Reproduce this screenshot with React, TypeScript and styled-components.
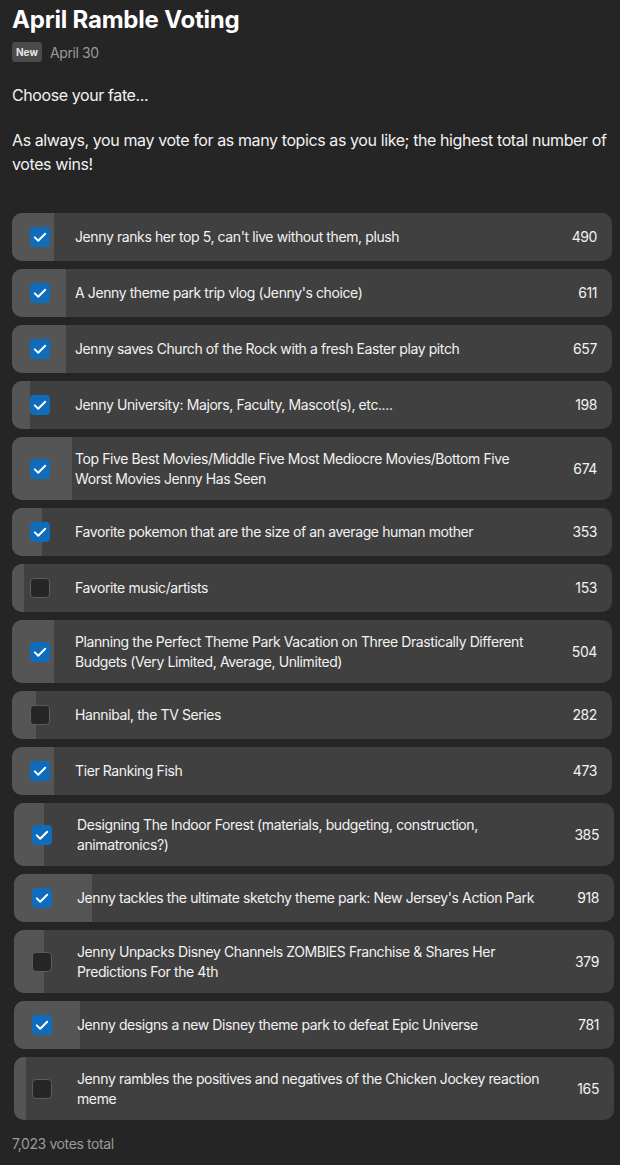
import React from 'react';
import styled, { createGlobalStyle } from 'styled-components';

interface Topic {
  title: string;
  votes: number;
  checked: boolean;
}

const topics: Topic[] = [
  { title: "Jenny ranks her top 5, can't live without them, plush", votes: 490, checked: true },
  { title: "A Jenny theme park trip vlog (Jenny's choice)", votes: 611, checked: true },
  { title: 'Jenny saves Church of the Rock with a fresh Easter play pitch', votes: 657, checked: true },
  { title: 'Jenny University: Majors, Faculty, Mascot(s), etc....', votes: 198, checked: true },
  {
    title: 'Top Five Best Movies/Middle Five Most Mediocre Movies/Bottom Five Worst Movies Jenny Has Seen',
    votes: 674,
    checked: true,
  },
  { title: 'Favorite pokemon that are the size of an average human mother', votes: 353, checked: true },
  { title: 'Favorite music/artists', votes: 153, checked: false },
  {
    title: 'Planning the Perfect Theme Park Vacation on Three Drastically Different Budgets (Very Limited, Average, Unlimited)',
    votes: 504,
    checked: true,
  },
  { title: 'Hannibal, the TV Series', votes: 282, checked: false },
  { title: 'Tier Ranking Fish', votes: 473, checked: true },
  {
    title: 'Designing The Indoor Forest (materials, budgeting, construction, animatronics?)',
    votes: 385,
    checked: true,
  },
  { title: "Jenny tackles the ultimate sketchy theme park: New Jersey's Action Park", votes: 918, checked: true },
  {
    title: 'Jenny Unpacks Disney Channels ZOMBIES Franchise & Shares Her Predictions For the 4th',
    votes: 379,
    checked: false,
  },
  { title: 'Jenny designs a new Disney theme park to defeat Epic Universe', votes: 781, checked: true },
  {
    title: 'Jenny rambles the positives and negatives of the Chicken Jockey reaction meme',
    votes: 165,
    checked: false,
  },
];

const total = topics.reduce((sum, t) => sum + t.votes, 0);

const GlobalStyle = createGlobalStyle`
  body {
    margin: 0;
    background: #252525;
    color: #f2f2f2;
    font-family: Inter, 'Noto Sans', sans-serif;
    letter-spacing: -0.025em;
  }
`;

const Page = styled.div`
  padding: 3px 8px 10px 12px;
`;

const Title = styled.h1`
  margin: 0;
  font-size: 24px;
  line-height: 34px;
  font-weight: 700;
  letter-spacing: -0.2px;
  color: #ffffff;
`;

const Meta = styled.div`
  display: flex;
  align-items: center;
  gap: 8px;
  margin-top: 5px;
`;

const Badge = styled.span`
  background: #4b4b4b;
  color: #e6e6e6;
  font-size: 10px;
  font-weight: 700;
  letter-spacing: 0;
  border-radius: 3px;
  padding: 0 4px;
  height: 20px;
  line-height: 20px;
`;

const Date = styled.span`
  color: #9a9a9a;
  font-size: 14px;
`;

const Paragraph = styled.p`
  margin: 21px 0 0;
  font-size: 16px;
  line-height: 24px;
  color: #f2f2f2;
`;

const List = styled.div`
  display: flex;
  flex-direction: column;
  gap: 8px;
  margin-top: 37px;
`;

const Row = styled.div<{ shift?: boolean }>`
  position: relative;
  display: flex;
  align-items: center;
  min-height: 48px;
  padding: 11.5px 15px 11.5px 18px;
  box-sizing: border-box;
  background: #404040;
  border-radius: 10px;
  overflow: hidden;
  margin-left: ${props => (props.shift ? '2px' : '0')};
  margin-right: ${props => (props.shift ? '-2px' : '0')};
`;

const Fill = styled.div`
  position: absolute;
  left: 0;
  top: 0;
  bottom: 0;
  background: #555555;
`;

const Box = styled.span<{ checked: boolean }>`
  position: relative;
  flex: none;
  width: 20px;
  height: 20px;
  box-sizing: border-box;
  border-radius: 4px;
  display: flex;
  align-items: center;
  justify-content: center;
  background: ${props => (props.checked ? '#0f6cbd' : '#262626')};
  border: ${props => (props.checked ? 'none' : '1px solid #5c5c5c')};
`;

const Label = styled.span`
  position: relative;
  flex: 1;
  margin-left: 25px;
  font-size: 14px;
  line-height: 20px;
  color: #f2f2f2;
`;

const Count = styled.span`
  position: relative;
  flex: none;
  margin-left: 24px;
  font-size: 14px;
  line-height: 20px;
  color: #f2f2f2;
`;

const Footer = styled.div`
  margin-top: 14px;
  font-size: 14px;
  line-height: 20px;
  color: #9a9a9a;
`;

const Check = () => (
  <svg width="20" height="20" viewBox="0 0 20 20" fill="none">
    <path d="M4.8 10.4l3.4 3.3 7-7" stroke="#ffffff" strokeWidth="2" strokeLinecap="round" strokeLinejoin="round" />
  </svg>
);

const App: React.FC = () => {
  return (
    <Page>
      <GlobalStyle />
      <Title>April Ramble Voting</Title>
      <Meta>
        <Badge>New</Badge>
        <Date>April 30</Date>
      </Meta>
      <Paragraph>Choose your fate...</Paragraph>
      <Paragraph>
        As always, you may vote for as many topics as you like; the highest total number of votes wins!
      </Paragraph>

      <List>
        {topics.map((t, i) => (
          <Row key={t.title} shift={i >= 10}>
            <Fill style={{ width: `${Math.round((t.votes / total) * 100)}%` }} />
            <Box checked={t.checked}>{t.checked && <Check />}</Box>
            <Label>{t.title}</Label>
            <Count>{t.votes}</Count>
          </Row>
        ))}
      </List>

      <Footer>{total.toLocaleString('en-US')} votes total</Footer>
    </Page>
  );
};

export default App;
